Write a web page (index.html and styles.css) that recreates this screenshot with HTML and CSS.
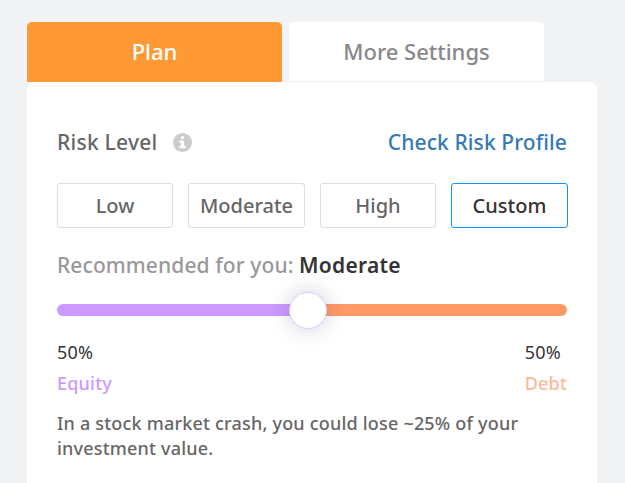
FILE: index.html
```html
<!DOCTYPE html>
<html lang="en">
<head>
    <meta charset="UTF-8">
    <meta name="viewport" content="width=device-width, initial-scale=1.0">
    <title>Plan</title>
    <link rel="stylesheet" href="styles.css">
</head>
<body>
    <div class="container">
        <div class="tabs">
            <button type="button" class="tab active">Plan</button>
            <button type="button" class="tab">More Settings</button>
        </div>

        <div class="panel">
            <div class="panel-header">
                <span class="title">Risk Level</span>
                <svg class="info" viewBox="0 0 18 18">
                    <circle cx="9" cy="9" r="9" fill="#ccc"/>
                    <path d="M7.5 3h3v2.6h-3zM6 7h4.5v5H12v2.4H6V12h1.5V9.2H6z" fill="#fff"/>
                </svg>
                <a href="#" class="profile-link">Check Risk Profile</a>
            </div>

            <div class="levels">
                <button type="button" class="level">Low</button>
                <button type="button" class="level">Moderate</button>
                <button type="button" class="level">High</button>
                <button type="button" class="level selected">Custom</button>
            </div>

            <p class="recommended">Recommended for you: <strong>Moderate</strong></p>

            <div class="slider">
                <div class="handle"></div>
            </div>

            <div class="split">
                <div class="equity">
                    <div class="percent">50%</div>
                    <div class="name">Equity</div>
                </div>
                <div class="debt">
                    <div class="percent">50%</div>
                    <div class="name">Debt</div>
                </div>
            </div>

            <p class="note">In a stock market crash, you could lose ~25% of your investment value.</p>
        </div>
    </div>
</body>
</html>
```

FILE: styles.css
```css
* {
    box-sizing: border-box;
}

body {
    margin: 0;
    height: 483px;
    overflow: hidden;
    background-color: #f1f3f5;
    font-family: "Noto Sans", "Open Sans", sans-serif;
    font-weight: 500;
    color: #666;
}

button {
    font: inherit;
    color: inherit;
    padding: 0;
    cursor: pointer;
}

.container {
    width: 570px;
    margin: 22px 0 0 27px;
}

.tabs {
    display: flex;
    gap: 7px;
}

.tab {
    width: 255px;
    height: 60px;
    padding-bottom: 2px;
    border: none;
    border-bottom: 1px solid #eee;
    border-radius: 5px 5px 0 0;
    background-color: #fff;
    color: #888;
    font-size: 22px;
}

.tab.active {
    border-bottom-color: #ff9933;
    background-color: #ff9933;
    color: #fff;
}

.panel {
    height: 420px;
    padding: 45px 30px 0;
    background-color: #fff;
    border-radius: 8px 8px 0 0;
}

.panel-header {
    display: flex;
    align-items: center;
    height: 30px;
    font-size: 21px;
}

.title {
    letter-spacing: 0.25px;
}

.info {
    width: 19px;
    height: 19px;
    margin-left: 15px;
}

.profile-link {
    margin-left: auto;
    color: #337ab7;
    letter-spacing: 0.1px;
    text-decoration: none;
}

.levels {
    display: grid;
    grid-template-columns: 116px 117px 116px 117px;
    gap: 15px;
    margin-top: 26px;
}

.level {
    height: 45px;
    border: 1px solid #ddd;
    border-radius: 3px;
    background-color: #fff;
    font-size: 20px;
}

.level.selected {
    border-color: #0d96ff;
    color: #333;
}

.recommended {
    margin: 22px 0 0;
    line-height: 30px;
    font-size: 21px;
    letter-spacing: 0.1px;
    color: #999;
}

.recommended strong {
    color: #333;
    font-weight: 600;
    letter-spacing: 0.25px;
}

.slider {
    display: flex;
    align-items: center;
    height: 12px;
    margin-top: 24px;
    border-radius: 6px;
    background: linear-gradient(to right, #cc99ff 50%, #ff9966 50%);
}

.handle {
    width: 38px;
    height: 37px;
    margin: 1px 0 0 232px;
    border: 1px solid #d9d0f2;
    border-radius: 50%;
    background-color: #fff;
    box-shadow: 0 0 20px rgba(50, 50, 120, 0.25);
}

.split {
    display: flex;
    justify-content: space-between;
    margin-top: 21px;
    font-size: 18px;
    letter-spacing: 0.2px;
    line-height: 31px;
}

.percent {
    color: #333;
    font-weight: 400;
}

.equity .name {
    color: #cc99ff;
}

.debt .name {
    color: #ffb899;
}

.note {
    margin: 12px 0 0;
    font-size: 18px;
    letter-spacing: 0.2px;
    line-height: 25px;
}
```
